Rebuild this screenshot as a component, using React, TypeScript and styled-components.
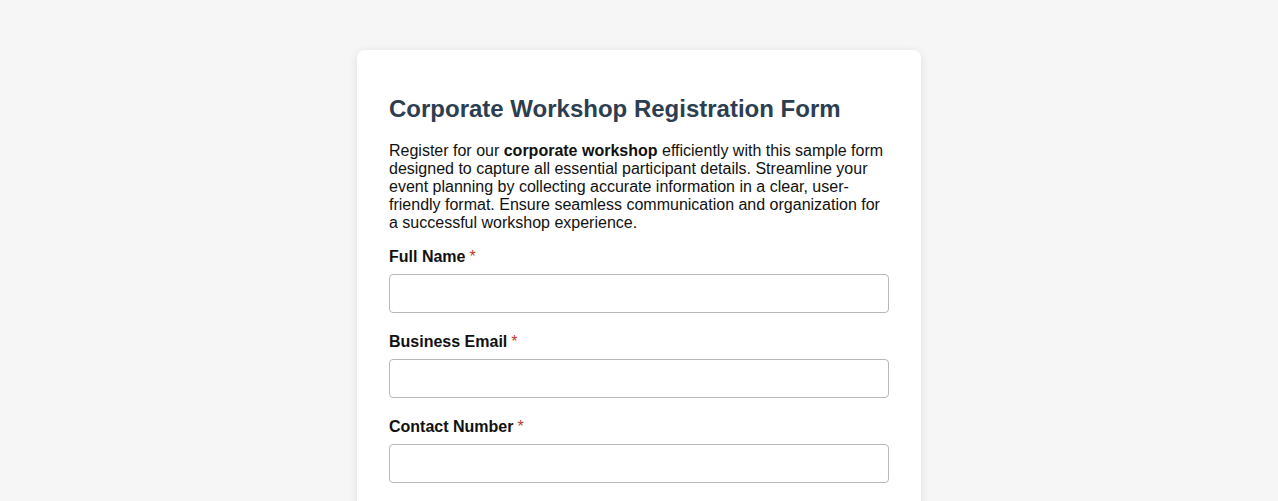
import React from 'react';
import styled, { createGlobalStyle } from 'styled-components';

const GlobalStyle = createGlobalStyle`
  html, body {
    margin: 0;
    padding: 0;
    background: #f6f6f6;
    font-family: "Liberation Sans", Arial, sans-serif;
  }
`;

const Page = styled.div`
  display: flex;
  justify-content: center;
  padding-top: 50px;
  min-height: 501px;
  box-sizing: border-box;
`;

const Card = styled.form`
  width: 564px;
  box-sizing: border-box;
  padding: 32px;
  background: #fff;
  border-radius: 8px;
  box-shadow: 0 2px 10px rgba(0, 0, 0, 0.1);
`;

const Title = styled.h2`
  margin: 13px 0 19px;
  font-size: 24px;
  font-weight: bold;
  color: #2c3e50;
`;

const Intro = styled.p`
  margin: 0 0 16px;
  font-size: 16px;
  color: #111;
`;

const Field = styled.div`
  margin-bottom: 20px;
`;

const Label = styled.label`
  display: block;
  margin-bottom: 8px;
  font-size: 16px;
  font-weight: bold;
  color: #111;
`;

const Required = styled.span`
  color: #c0392b;
  font-weight: normal;
  margin-left: 4px;
`;

const Input = styled.input`
  display: block;
  width: 100%;
  height: 39px;
  box-sizing: border-box;
  padding: 8px 10px;
  border: 1px solid #b8b8b8;
  border-radius: 4px;
  font-family: inherit;
  font-size: 16px;
  background: #fff;
  outline: none;
`;

const fields = [
  { id: 'fullName', label: 'Full Name', type: 'text' },
  { id: 'email', label: 'Business Email', type: 'email' },
  { id: 'phone', label: 'Contact Number', type: 'tel' },
];

const App = () => {
  return (
    <>
      <GlobalStyle />
      <Page>
        <Card onSubmit={(e) => e.preventDefault()}>
          <Title>Corporate Workshop Registration Form</Title>
          <Intro>
            Register for our <strong>corporate workshop</strong> efficiently with this sample form designed to capture all essential
            participant details. Streamline your event planning by collecting accurate information in a clear, user-friendly format.
            Ensure seamless communication and organization for a successful workshop experience.
          </Intro>
          {fields.map((f) => (
            <Field key={f.id}>
              <Label htmlFor={f.id}>
                {f.label}
                <Required>*</Required>
              </Label>
              <Input id={f.id} type={f.type} />
            </Field>
          ))}
        </Card>
      </Page>
    </>
  );
};

export default App;
